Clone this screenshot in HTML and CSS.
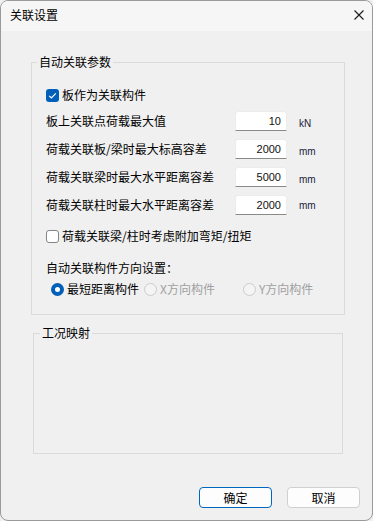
FILE: index.html
```html
<!DOCTYPE html>
<html>
<head>
  <title>关联设置</title>
  <link rel="stylesheet" href="styles.css">
</head>
<body>
  <div class="window">
    <div class="titlebar">
      <span class="title">关联设置</span>
      <svg class="close" width="10" height="10" viewBox="0 0 10 10">
        <path d="M0.5 0.5 L9.5 9.5 M9.5 0.5 L0.5 9.5" stroke="#1a1a1a" stroke-width="1.1" fill="none"/>
      </svg>
    </div>

    <div class="dialog-body">
      <fieldset class="group group-auto">
        <legend>自动关联参数</legend>
        <div class="group-inner">
          <div class="check-row first">
            <span class="checkbox checked">
              <svg width="13" height="13" viewBox="0 0 13 13">
                <path d="M3.2 6.8 L5.4 9 L9.8 4.4" stroke="#fff" stroke-width="1.2" fill="none"/>
              </svg>
            </span>
            <span>板作为关联构件</span>
          </div>

          <div class="field-row">
            <span class="field-label">板上关联点荷载最大值</span>
            <input class="num" type="text" value="10">
            <span class="unit">kN</span>
          </div>
          <div class="field-row">
            <span class="field-label">荷载关联板/梁时最大标高容差</span>
            <input class="num" type="text" value="2000">
            <span class="unit">mm</span>
          </div>
          <div class="field-row">
            <span class="field-label">荷载关联梁时最大水平距离容差</span>
            <input class="num" type="text" value="5000">
            <span class="unit">mm</span>
          </div>
          <div class="field-row">
            <span class="field-label">荷载关联柱时最大水平距离容差</span>
            <input class="num" type="text" value="2000">
            <span class="unit unit-high">mm</span>
          </div>

          <div class="check-row second">
            <span class="checkbox"></span>
            <span>荷载关联梁/柱时考虑附加弯矩/扭矩</span>
          </div>

          <div class="dir-title">自动关联构件方向设置：</div>
          <div class="radio-row">
            <div class="radio-item"><span class="radio on"></span><span>最短距离构件</span></div>
            <div class="radio-item disabled"><span class="radio"></span><span>X方向构件</span></div>
            <div class="radio-item disabled"><span class="radio"></span><span>Y方向构件</span></div>
          </div>
        </div>
      </fieldset>

      <fieldset class="group group-map">
        <legend>工况映射</legend>
      </fieldset>

      <div class="buttons">
        <button class="btn primary">确定</button>
        <button class="btn">取消</button>
      </div>
    </div>
  </div>
</body>
</html>
```

FILE: styles.css
```css
/* dialog */
body {
  margin: 0;
  font-family: "Noto Sans CJK SC", "Noto Sans", sans-serif;
  font-size: 12px;
  color: #000;
  background-color: #f0f0f0;
}

.window {
  width: 373px;
  height: 521px;
  box-sizing: border-box;
  border: 1px solid #9a9a9a;
  border-radius: 8px;
  background-color: #f0f0f0;
  overflow: hidden;
}

.titlebar {
  height: 30px;
  box-sizing: border-box;
  padding: 0 8px 3px 9px;
  display: flex;
  align-items: center;
  justify-content: space-between;
  background-color: #f6f6f6;
}

.title {
  line-height: 16px;
}

.close {
  display: block;
  margin-top: 1px;
}

.dialog-body {
  padding-top: 23px;
}

/* group boxes */
.group {
  margin: 0;
  padding: 0;
  min-width: 0;
  border: 1px solid #dadada;
  box-sizing: border-box;
}

.group legend {
  padding: 0 2px;
  line-height: 16px;
}

.group-auto {
  margin-left: 30px;
  width: 314px;
}

.group-auto legend {
  margin-left: 5px;
}

.group-map {
  margin-top: 10px;
  margin-left: 32px;
  width: 310px;
  height: 129px;
}

.group-map legend {
  margin-left: 6px;
}

.group-inner {
  padding: 0 0 15px 14px;
}

/* check boxes */
.check-row {
  display: flex;
  align-items: center;
  height: 20px;
  line-height: 20px;
}

.check-row.first {
  margin-top: 15px;
}

.check-row.second {
  margin-top: 11px;
}

.checkbox {
  width: 13px;
  height: 13px;
  box-sizing: border-box;
  margin-right: 3px;
  border: 1px solid #858585;
  border-radius: 3px;
  background-color: #fff;
  flex: none;
}

.checkbox.checked {
  border: none;
  background-color: #005fb8;
}

.checkbox svg {
  display: block;
}

/* numeric fields */
.field-row {
  display: flex;
  align-items: flex-start;
  height: 20px;
  margin-top: 8px;
}

.check-row.first + .field-row {
  margin-top: 6px;
}

.field-label {
  width: 189px;
  line-height: 20px;
}

.num {
  width: 52px;
  height: 20px;
  box-sizing: border-box;
  margin: 0;
  padding: 0 5px 0 0;
  border: 1px solid #ececec;
  border-bottom-color: #8a8a8a;
  border-radius: 3px 3px 0 0;
  background-color: #fff;
  font-family: "Liberation Sans", Arial, sans-serif;
  font-size: 11px;
  color: #111;
  text-align: right;
  outline: none;
}

.unit {
  margin-left: 12px;
  margin-top: 7px;
  line-height: 12px;
  font-family: "Liberation Sans", Arial, sans-serif;
  font-size: 10px;
  color: #1c1c3c;
}

.unit-high {
  margin-top: 5px;
}

/* direction radios */
.dir-title {
  margin-top: 12px;
  line-height: 20px;
}

.radio-row {
  display: grid;
  grid-template-columns: 93px 99px auto;
  margin-left: 5px;
  margin-top: 1px;
  line-height: 20px;
}

.radio-item {
  display: flex;
  align-items: center;
}

.radio {
  width: 13px;
  height: 13px;
  box-sizing: border-box;
  margin-right: 3px;
  border-radius: 50%;
  border: 1px solid #cccccc;
  background-color: #f4f4f4;
  flex: none;
}

.radio.on {
  border: 4px solid #005fb8;
  background-color: #fff;
}

.radio-item.disabled {
  color: #a0a0a0;
}

/* buttons */
.buttons {
  display: flex;
  justify-content: flex-end;
  gap: 15px;
  margin-top: 33px;
  padding-right: 12px;
}

.btn {
  width: 73px;
  height: 21px;
  margin: 0;
  padding: 0;
  border: 1px solid #d0d0d0;
  border-radius: 4px;
  background-color: #fdfdfd;
  font-family: "Noto Sans CJK SC", "Noto Sans", sans-serif;
  font-size: 12px;
  line-height: 19px;
  color: #000;
}

.btn.primary {
  border-color: #0067c0;
}
```
